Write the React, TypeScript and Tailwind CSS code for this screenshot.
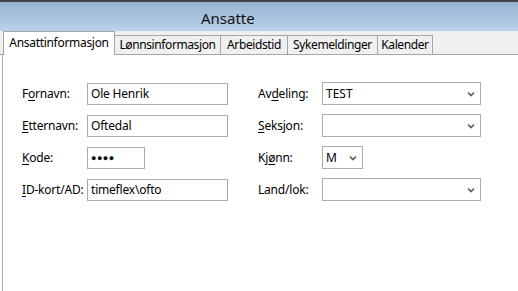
import React from "react";

const tabs = [
  { t: "Lønnsinformasjon", w: "w-[106px]" },
  { t: "Arbeidstid", w: "w-[67px]" },
  { t: "Sykemeldinger", w: "w-[90px]" },
  { t: "Kalender", w: "w-[55px]" },
];

function Chevron() {
  return (
    <svg width="8" height="6" viewBox="0 0 8 6" className="shrink-0">
      <polyline points="1,1.5 4,4.5 7,1.5" fill="none" stroke="#5a5a5a" strokeWidth="1.6" />
    </svg>
  );
}

function Label({ pre, u, post }: { pre: string; u: string; post: string }) {
  return (
    <div className="text-[12px] text-black leading-none whitespace-nowrap tracking-[-0.2px]">
      {pre}
      <span className="underline underline-offset-2">{u}</span>
      {post}
    </div>
  );
}

function TextBox({ value, w }: { value: React.ReactNode; w?: string }) {
  return (
    <div
      className={`h-[22px] border border-[#ababab] bg-white flex items-center pl-[3px] text-[12px] text-black tracking-[-0.2px] ${w ?? "w-full"}`}
    >
      {value}
    </div>
  );
}

function Select({ value, w }: { value: string; w?: string }) {
  return (
    <div
      className={`h-[23px] border border-[#ababab] bg-white flex items-center justify-between pl-[3px] pr-[5px] text-[12px] text-black ${w ?? "w-full"}`}
    >
      <span>{value}</span>
      <Chevron />
    </div>
  );
}

export default function App() {
  return (
    <div className="w-[518px] h-[291px] overflow-hidden flex flex-col bg-white font-['Noto_Sans',sans-serif]">
      {/* window top edge + title bar */}
      <div className="h-[2px] bg-[#454545]" />
      <div className="h-[29px] bg-gradient-to-b from-[#97b3d1] to-[#bad2ea] pl-[201px] pt-[9px] text-[15px] leading-none text-[#111]">
        Ansatte
      </div>

      {/* tab strip */}
      <div className="h-[24px] bg-[#f0f0f0] flex items-end pl-[3px] border-b border-[#a6a6a6]">
        <div className="h-[24px] w-[112px] -mb-px bg-white border-l border-t border-r border-[#a6a6a6] flex items-center justify-center pb-[2px] text-[12px] tracking-[-0.3px] text-black relative z-10">
          Ansattinformasjon
        </div>
        {tabs.map((tab) => (
          <div
            key={tab.t}
            className={`h-[19px] ${tab.w} border-t border-r border-[#a6a6a6] bg-[#f0f0f0] flex items-center justify-center text-[12px] tracking-[-0.4px] text-black leading-none whitespace-nowrap`}
          >
            {tab.t}
          </div>
        ))}
      </div>

      {/* content */}
      <div className="flex-1 ml-[2px] border-l border-[#a6a6a6] bg-white pt-[27px] pl-[19px]">
        <div className="grid grid-cols-[65px_141px_30px_64px_159px] gap-y-[9px] items-center">
          <Label pre="F" u="o" post="rnavn:" />
          <TextBox value="Ole Henrik" />
          <div />
          <Label pre="Av" u="d" post="eling:" />
          <Select value="TEST" />

          <Label pre="" u="E" post="tternavn:" />
          <TextBox value="Oftedal" />
          <div />
          <Label pre="" u="S" post="eksjon:" />
          <Select value="" />

          <Label pre="" u="K" post="ode:" />
          <TextBox value={<span className="text-[9px] tracking-[0.5px]">●●●●</span>} w="w-[58px]" />
          <div />
          <Label pre="Kj" u="ø" post="nn:" />
          <Select value="M" w="w-[41px]" />

          <Label pre="" u="I" post="D-kort/AD:" />
          <TextBox value="timeflex\ofto" />
          <div />
          <Label pre="Land/lok:" u="" post="" />
          <Select value="" />
        </div>
      </div>
    </div>
  );
}
